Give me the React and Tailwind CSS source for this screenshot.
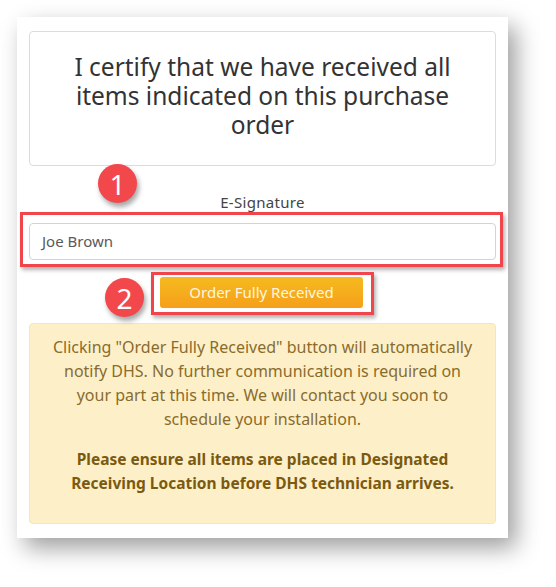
import React from 'react'

const font = { fontFamily: '"Noto Sans", "Open Sans", sans-serif' }

const Badge = ({ n, className }) => (
  <div
    className={`absolute w-[39px] h-[39px] rounded-full bg-[#f2474b] text-white text-[28px] leading-none flex items-center justify-center shadow-[2px_4px_5px_rgba(0,0,0,0.35)] ${className}`}
  >
    {n}
  </div>
)

const App = () => {
  return (
    <div className="w-[556px] h-[587px] bg-white pt-[17px] pl-[17px]" style={font}>
      <div className="relative w-[491px] h-[521px] bg-white px-[12px] pt-[14px] shadow-[8px_10px_22px_rgba(0,0,0,0.38)]">
        {/* certify box */}
        <div className="h-[135px] border border-[#dcdcdc] rounded-[4px] px-[34px] pt-[20px] text-center text-[24.5px] leading-[29px] text-[#333]">
          I certify that we have received all items indicated on this purchase order
        </div>

        <p className="mt-[26px] text-center text-[15px] leading-[20px] tracking-[0.3px] text-[#444]">E-Signature</p>

        <div className="mt-[11px] h-[37px] border border-[#cfd4da] rounded-[4px] flex items-center px-[12px] text-[15px] text-[#5a5a5a]">
          Joe Brown
        </div>

        <div className="mt-[17px] flex justify-center pr-[2px]">
          <button className="w-[203px] h-[31px] rounded-[3px] bg-gradient-to-b from-[#f5ba1e] to-[#f69f1b] text-[15px] text-[#fff6df]">
            Order Fully Received
          </button>
        </div>

        {/* notice */}
        <div className="mt-[15px] h-[201px] bg-[#fdf0c9] border border-[#f8e6ae] rounded-[4px] px-[20px] pt-[11px] text-center text-[16px] leading-[24px] text-[#8a6b2c]">
          <p>
            Clicking "Order Fully Received" button will automatically notify DHS. No further communication is required on
            your part at this time. We will contact you soon to schedule your installation.
          </p>
          <p className="mt-[16px] px-[10px] text-[15.5px] font-bold text-[#7b5a10]">
            Please ensure all items are placed in Designated Receiving Location before DHS technician arrives.
          </p>
        </div>

        {/* annotations */}
        <div className="absolute left-[3px] top-[195px] w-[483px] h-[55px] border-[3px] border-[#f0454b] shadow-[2px_3px_4px_rgba(0,0,0,0.3)]" />
        <div className="absolute left-[134px] top-[255px] w-[223px] h-[43px] border-[3px] border-[#f0454b] shadow-[2px_3px_4px_rgba(0,0,0,0.3)]" />
        <Badge n="1" className="left-[81px] top-[147px]" />
        <Badge n="2" className="left-[88px] top-[261px]" />
      </div>
    </div>
  )
}

export default App
